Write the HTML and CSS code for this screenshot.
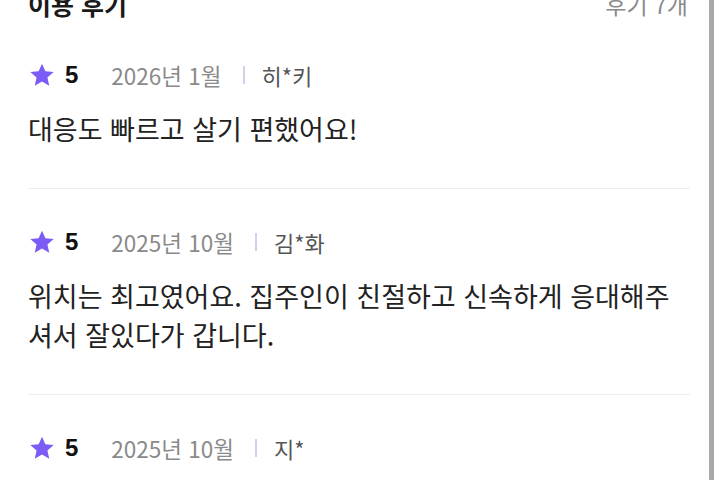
FILE: index.html
```html
<!DOCTYPE html>
<html lang="ko">
<head>
<meta charset="utf-8">
<link rel="stylesheet" href="styles.css">
</head>
<body>
<div class="page">
  <div class="header">
    <h2 class="title">이용 후기</h2>
    <span class="count">후기 7개</span>
  </div>
  <div class="review">
    <div class="meta">
      <svg class="star" viewBox="0 0 24 24"><path d="M12 1.5l3.1 7.1 7.7.7-5.8 5.1 1.7 7.6L12 18l-6.7 4 1.7-7.6-5.8-5.1 7.7-.7z"/></svg>
      <span class="score">5</span>
      <span class="date">2026년 1월</span>
      <span class="sep"></span>
      <span class="name">히*키</span>
    </div>
    <p class="text">대응도 빠르고 살기 편했어요!</p>
  </div>
  <div class="review">
    <div class="meta">
      <svg class="star" viewBox="0 0 24 24"><path d="M12 1.5l3.1 7.1 7.7.7-5.8 5.1 1.7 7.6L12 18l-6.7 4 1.7-7.6-5.8-5.1 7.7-.7z"/></svg>
      <span class="score">5</span>
      <span class="date">2025년 10월</span>
      <span class="sep"></span>
      <span class="name">김*화</span>
    </div>
    <p class="text">위치는 최고였어요. 집주인이 친절하고 신속하게 응대해주셔서 잘있다가 갑니다.</p>
  </div>
  <div class="review">
    <div class="meta">
      <svg class="star" viewBox="0 0 24 24"><path d="M12 1.5l3.1 7.1 7.7.7-5.8 5.1 1.7 7.6L12 18l-6.7 4 1.7-7.6-5.8-5.1 7.7-.7z"/></svg>
      <span class="score">5</span>
      <span class="date">2025년 10월</span>
      <span class="sep"></span>
      <span class="name">지*</span>
    </div>
    <p class="text">친절하시고 깔끔했어요.</p>
  </div>
</div>
<div class="scrollbar"></div>
</body>
</html>
```
FILE: styles.css
```css
html, body {
  margin: 0;
  padding: 0;
  background: #fff;
  overflow: hidden;
  height: 480px;
}
body {
  font-family: "Noto Sans CJK KR", "Noto Sans", sans-serif;
  color: #222;
}
.page {
  padding: 0 30px 0 28px;
}
.header {
  display: flex;
  justify-content: space-between;
  align-items: center;
  height: 36px;
  margin-top: -14px;
}
.title {
  margin: 0;
  font-size: 25px;
  font-weight: 700;
  color: #1a1a1a;
  line-height: 36px;
}
.count {
  font-size: 23px;
  color: #8a8a8a;
  line-height: 36px;
  margin-right: 2px;
}
.review {
  padding: 37px 0 40px;
  border-bottom: 1px solid #ececec;
}
.meta {
  display: flex;
  align-items: center;
  height: 32px;
}
.star {
  width: 26px;
  height: 26px;
  fill: #7c5cf6;
  margin-left: 1px;
}
.score {
  font-size: 24px;
  font-weight: 700;
  color: #111;
  margin-left: 10px;
  font-family: "Liberation Sans", "Noto Sans CJK KR", sans-serif;
}
.date {
  font-size: 22.5px;
  color: #8a8a8a;
  margin-left: 33px;
}
.sep {
  width: 2px;
  height: 18px;
  background: #d2cff0;
  margin-left: 21px;
}
.name {
  font-size: 22px;
  color: #555;
  margin-left: 17px;
}
.text {
  margin: 18px 0 0;
  font-size: 27px;
  line-height: 39px;
  color: #222;
  max-width: 645px;
}
.scrollbar {
  position: fixed;
  top: 0;
  right: 6px;
  width: 5px;
  height: 480px;
  background: #a9a9a9;
}
```
